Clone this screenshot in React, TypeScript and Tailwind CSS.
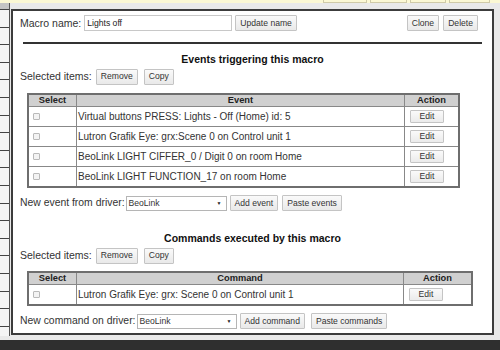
import React from "react";

const Btn = ({ children, className = "" }: { children: React.ReactNode; className?: string }) => (
  <div
    className={
      "flex h-[16px] items-center justify-center border border-[#c4c4c4] bg-gradient-to-b from-[#fafafa] to-[#e9e9e9] px-[4px] text-[8.6px] leading-none text-[#333] rounded-[1px] whitespace-nowrap " +
      className
    }
  >
    {children}
  </div>
);

const Check = () => (
  <div className="ml-[4px] h-[7px] w-[7px] rounded-[1px] border border-[#b9b9b9] bg-[#f3f3f3]" />
);

const EditBtn = () => (
  <div className="ml-[5px] flex h-[13px] w-[34px] items-center justify-center border border-[#c4c4c4] bg-gradient-to-b from-[#fafafa] to-[#ebebeb] text-[8.6px] leading-none text-[#333] rounded-[1px]">
    Edit
  </div>
);

const Select = ({ w }: { w: string }) => (
  <div
    className={
      "flex h-[15px] items-center justify-between border border-[#b5b5b5] bg-white pl-[2px] pr-[4px] text-[8.6px] leading-none text-[#333] " +
      w
    }
  >
    <span>BeoLink</span>
    <span className="text-[5px] text-[#222]">▼</span>
  </div>
);

export default function App() {
  const events = [
    "Virtual buttons PRESS: Lights - Off (Home) id: 5",
    "Lutron Grafik Eye: grx:Scene 0 on Control unit 1",
    "BeoLink LIGHT CIFFER_0 / Digit 0 on room Home",
    "BeoLink LIGHT FUNCTION_17 on room Home",
  ];
  const stripRows = Array.from({ length: 19 });
  return (
    <div
      className="flex h-[350px] w-[500px] flex-col overflow-hidden bg-[#e9e9e9]"
      style={{ fontFamily: '"Liberation Sans", Arial, sans-serif' }}
    >
      {/* top yellow strip */}
      <div className="relative h-[3px] shrink-0 bg-[#fbf8d4]">
        <div className="absolute left-[323px] top-0 h-[3px] w-[44px] border-x border-b border-[#cfcaa8]" />
        <div className="absolute left-[370px] top-0 h-[3px] w-[37px] border-x border-b border-[#cfcaa8]" />
        <div className="absolute left-[410px] top-0 h-[3px] w-[36px] border-x border-b border-[#cfcaa8]" />
        <div className="absolute left-[449px] top-0 h-[3px] w-[41px] border-x border-b border-[#cfcaa8]" />
      </div>

      <div className="flex h-[337px] shrink-0">
        {/* left strip of underlying page */}
        <div className="flex h-[333px] w-[10px] flex-col border-r border-[#555] bg-[#f4f4f4]">
          <div className="h-[6px] shrink-0 bg-[#c4c4c4]" />
          {stripRows.map((_, i) => (
            <div key={i} className="h-[17.6px] shrink-0 border-t border-[#444]" />
          ))}
        </div>

        {/* dialog */}
        <div className="ml-[1px] mt-[6px] flex h-[326px] w-[483px] flex-col border-2 border-[#3c3c3c] bg-white">
          {/* name row */}
          <div className="mt-[4px] flex h-[16px] items-center pl-[7px] pr-[14px]">
            <span className="text-[10.5px] leading-none text-[#333]">Macro name:</span>
            <div className="ml-[3px] flex h-[16px] w-[148px] items-center border border-[#c8c8c8] bg-white pl-[2px] text-[8.6px] leading-none text-[#222]">
              Lights off
            </div>
            <Btn className="ml-[3px]">Update name</Btn>
            <div className="flex-1" />
            <Btn>Clone</Btn>
            <Btn className="ml-[4px]">Delete</Btn>
          </div>

          <div className="mx-[10px] mt-[11px] h-[2px] bg-[#333]" />

          <div className="mt-[9px] text-center text-[10.5px] font-bold leading-[12px] text-[#111]">
            Events triggering this macro
          </div>

          <div className="mt-[4px] flex h-[15px] items-center pl-[7px]">
            <span className="text-[10.5px] leading-none text-[#333]">Selected items:</span>
            <Btn className="ml-[4px] h-[15px]">Remove</Btn>
            <Btn className="ml-[6px] h-[15px]">Copy</Btn>
          </div>

          {/* events table */}
          <div className="ml-[14px] mt-[9px] w-[433px] border-2 border-[#6e6e6e] text-[#333]">
            <div className="flex h-[11px] bg-[#d0d0d0] text-[9.3px] font-bold leading-none text-[#222]">
              <div className="flex w-[47px] items-center justify-center">Select</div>
              <div className="flex w-[328px] items-center justify-center border-l border-[#888]">Event</div>
              <div className="flex w-[54px] items-center justify-center border-l border-[#888]">Action</div>
            </div>
            {events.map((e) => (
              <div key={e} className="flex h-[20px] border-t border-[#888] text-[10px] leading-none">
                <div className="flex w-[47px] items-center">
                  <Check />
                </div>
                <div className="flex w-[328px] items-center border-l border-[#888] pl-[1px]">{e}</div>
                <div className="flex w-[54px] items-center border-l border-[#888]">
                  <EditBtn />
                </div>
              </div>
            ))}
          </div>

          <div className="mt-[7px] flex h-[16px] items-center pl-[7px]">
            <span className="text-[10.4px] leading-none text-[#333]">New event from driver:</span>
            <Select w="ml-[1px] w-[101px]" />
            <Btn className="ml-[3px]">Add event</Btn>
            <Btn className="ml-[4px]">Paste events</Btn>
          </div>

          <div className="mt-[21px] text-center text-[10.5px] font-bold leading-[12px] text-[#111]">
            Commands executed by this macro
          </div>

          <div className="mt-[4px] flex h-[15px] items-center pl-[7px]">
            <span className="text-[10.5px] leading-none text-[#333]">Selected items:</span>
            <Btn className="ml-[4px] h-[15px]">Remove</Btn>
            <Btn className="ml-[6px] h-[15px]">Copy</Btn>
          </div>

          {/* commands table */}
          <div className="ml-[14px] mt-[8px] w-[446px] border-2 border-[#6e6e6e] text-[#333]">
            <div className="flex h-[11px] bg-[#d0d0d0] text-[9.3px] font-bold leading-none text-[#222]">
              <div className="flex w-[47px] items-center justify-center">Select</div>
              <div className="flex w-[327px] items-center justify-center border-l border-[#888]">Command</div>
              <div className="flex w-[68px] items-center justify-center border-l border-[#888]">Action</div>
            </div>
            <div className="flex h-[20px] border-t border-[#888] text-[10px] leading-none">
              <div className="flex w-[47px] items-center">
                <Check />
              </div>
              <div className="flex w-[327px] items-center border-l border-[#888] pl-[1px]">
                Lutron Grafik Eye: grx: Scene 0 on Control unit 1
              </div>
              <div className="flex w-[68px] items-center border-l border-[#888]">
                <EditBtn />
              </div>
            </div>
          </div>

          <div className="mt-[7px] flex h-[16px] items-center pl-[7px]">
            <span className="text-[10.4px] leading-none text-[#333]">New command on driver:</span>
            <Select w="ml-[1px] w-[100px]" />
            <Btn className="ml-[3px]">Add command</Btn>
            <Btn className="ml-[6px]">Paste commands</Btn>
          </div>
        </div>
      </div>

      <div className="flex-1 bg-[#2f2f2f]" />
    </div>
  );
}
